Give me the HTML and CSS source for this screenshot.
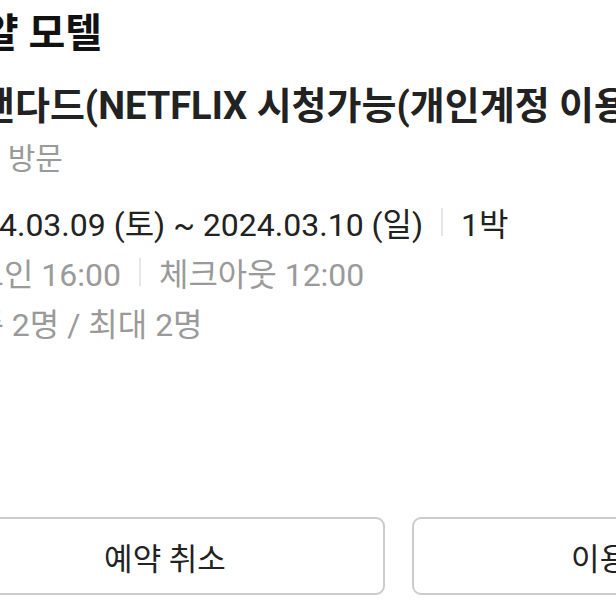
FILE: index.html
```html
<!DOCTYPE html>
<html lang="ko">
<head>
    <meta charset="UTF-8">
    <meta name="viewport" content="width=device-width, initial-scale=1.0">
    <title>예약 상세</title>
    <link rel="stylesheet" href="styles.css">
</head>
<body>
    <main class="booking">
        <h1 class="hotel-name">로얄 모텔</h1>
        <p class="room-name">스탠다드(NETFLIX 시청가능(개인계정 이용)</p>
        <p class="visit">도보 방문</p>

        <div class="info">
            <p class="stay">
                <span>2024.03.09 (토) ~ 2024.03.10 (일)</span>
                <span class="sep"></span>
                <span>1박</span>
            </p>
            <p class="time">
                <span>체크인 16:00</span>
                <span class="sep"></span>
                <span>체크아웃 12:00</span>
            </p>
            <p class="people">기준 2명 / 최대 2명</p>
        </div>

        <div class="actions">
            <button class="btn">예약 취소</button>
            <button class="btn">이용 안내</button>
        </div>
    </main>
</body>
</html>
```

FILE: styles.css
```css
body {
    margin: 0;
    padding: 0;
    background: #ffffff;
    color: #222222;
    font-family: Roboto, "Noto Sans CJK KR", sans-serif;
    overflow: hidden;
}
.booking {
    width: 907px;
    margin-left: -55px;
    padding-top: 8px;
}
p {
    margin: 0;
}
.hotel-name {
    margin: 0;
    font-size: 40px;
    font-weight: 700;
    line-height: 52px;
    color: #111111;
}
.room-name {
    margin-top: 21px;
    font-size: 38px;
    font-weight: 700;
    line-height: 50px;
    white-space: nowrap;
}
.visit {
    margin-top: 6px;
    font-size: 30px;
    line-height: 44px;
    color: #9a9a9a;
}
.info {
    margin-top: 16px;
}
.stay,
.time,
.people {
    display: flex;
    align-items: center;
    gap: 18px;
    height: 50px;
    font-size: 32px;
    white-space: nowrap;
}
.stay {
    color: #222222;
}
.time,
.people {
    color: #9a9a9a;
}
.sep {
    width: 2px;
    height: 28px;
    background: #e6e6e6;
}
.actions {
    display: flex;
    gap: 27px;
    margin-top: 170px;
}
.btn {
    flex: 1;
    height: 78px;
    background: #ffffff;
    border: 2px solid #cccccc;
    border-radius: 9px;
    font-family: inherit;
    font-size: 31px;
    color: #222222;
}
```
